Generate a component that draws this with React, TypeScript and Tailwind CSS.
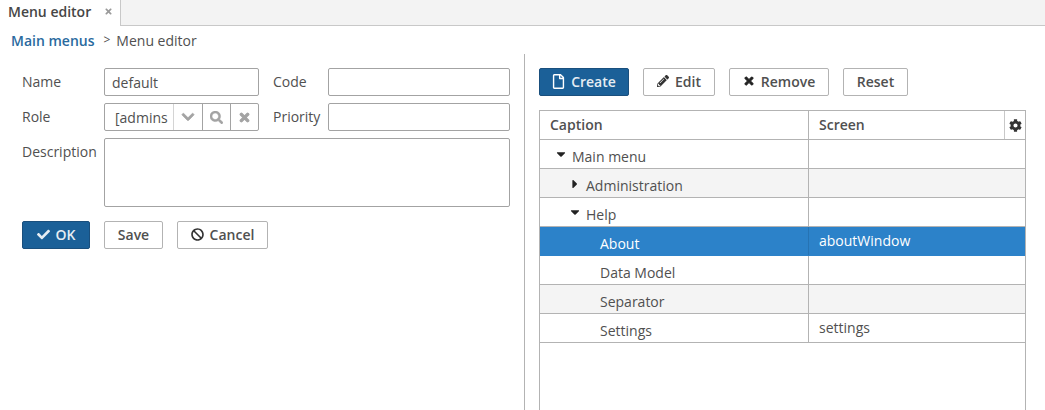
import React from "react";
import { FaBan, FaCaretDown, FaCaretRight, FaCheck, FaChevronDown, FaCog, FaPencilAlt, FaRegFile, FaSearch, FaTimes } from "react-icons/fa";

const btn = "h-[28px] pb-[2px] flex items-center justify-center gap-[6px] rounded-[2px] border border-[#b3b3b3] bg-white text-[14px] font-semibold text-[#505050]";
const primary = "h-[28px] pb-[2px] flex items-center justify-center gap-[6px] rounded-[2px] border border-[#1a4f7d] bg-[#1b6098] text-[14px] font-semibold text-[#e6edf3]";
const input = "h-[28px] rounded-[2px] border border-[#a3a3a3] bg-white";

const rows: { label: string; pad: string; screen?: string; caret?: "down" | "right"; alt?: boolean; sel?: boolean }[] = [
  { label: "Main menu", pad: "pl-[32px]", caret: "down" },
  { label: "Administration", pad: "pl-[46px]", caret: "right", alt: true },
  { label: "Help", pad: "pl-[46px]", caret: "down" },
  { label: "About", pad: "pl-[60px]", screen: "aboutWindow", sel: true },
  { label: "Data Model", pad: "pl-[60px]" },
  { label: "Separator", pad: "pl-[60px]", alt: true },
  { label: "Settings", pad: "pl-[60px]", screen: "settings" },
];

export default function App() {
  return (
    <div className="w-[1045px] h-[410px] overflow-hidden bg-white flex flex-col text-[14px] text-[#505050] font-['Open_Sans',sans-serif]">
      <div className="h-[26px] flex bg-[#f3f3f3] border-b border-[#c8c8c8]">
        <div className="w-[121px] h-[26px] pl-[8px] pr-[7px] pb-[3px] flex items-center justify-between bg-white border-r border-[#c8c8c8] font-semibold text-[#464646]">
          <span>Menu editor</span>
          <FaTimes className="w-[9px] h-[9px] text-[#9a9a9a]" />
        </div>
      </div>
      <div className="h-[28px] flex items-center pl-[11px]">
        <span className="font-semibold text-[#2a6a9e]">Main menus</span>
        <span className="ml-[9px] text-[12px]">&gt;</span>
        <span className="ml-[6px]">Menu editor</span>
      </div>
      <div className="flex flex-1 min-h-0">
        <div className="w-[525px] h-full border-r border-[#b3b3b3] pt-[14px] pl-[22px] pr-[14px] flex flex-col">
          <div className="flex items-center">
            <span className="w-[82px] pb-[2px]">Name</span>
            <div className={input + " w-[155px] flex items-center pl-[7px]"}>default</div>
            <span className="ml-[14px] w-[55px] pb-[2px]">Code</span>
            <div className={input + " w-[182px]"} />
          </div>
          <div className="flex items-center mt-[7px]">
            <span className="w-[82px] pb-[2px]">Role</span>
            <div className={input + " w-[155px] flex items-stretch"}>
              <div className="w-[69px] pl-[10px] flex items-center overflow-hidden border-r border-[#d4d4d4]">[admins</div>
              <div className="w-[29px] flex items-center justify-center border-r border-[#a3a3a3]"><FaChevronDown className="w-[14px] h-[14px] text-[#a3a3a3] stroke-[30]" /></div>
              <div className="w-[28px] flex items-center justify-center border-r border-[#a3a3a3]"><FaSearch className="w-[13px] h-[13px] text-[#a3a3a3] stroke-[20]" /></div>
              <div className="flex-1 flex items-center justify-center"><FaTimes className="w-[13px] h-[13px] text-[#a3a3a3] stroke-[40]" /></div>
            </div>
            <span className="ml-[14px] w-[55px] pb-[2px]">Priority</span>
            <div className={input + " w-[182px]"} />
          </div>
          <div className="flex items-start mt-[7px]">
            <span className="w-[82px] pt-[3px]">Description</span>
            <div className="w-[406px] h-[69px] rounded-[2px] border border-[#a3a3a3] bg-white" />
          </div>
          <div className="flex mt-[14px]">
            <button className={primary + " w-[68px]"}><FaCheck className="w-[13px] h-[13px]" />OK</button>
            <button className={btn + " w-[59px] ml-[14px]"}>Save</button>
            <button className={btn + " w-[91px] ml-[14px]"}><FaBan className="w-[13px] h-[13px] text-[#333]" />Cancel</button>
          </div>
        </div>
        <div className="flex-1 pt-[14px] pl-[14px] flex flex-col min-w-0">
          <div className="flex gap-[14px]">
            <button className={primary + " w-[90px]"}><FaRegFile className="w-[13px] h-[15px] text-white" />Create</button>
            <button className={btn + " w-[72px]"}><FaPencilAlt className="w-[12px] h-[12px] text-[#333]" />Edit</button>
            <button className={btn + " w-[100px]"}><FaTimes className="w-[12px] h-[12px] text-[#222] stroke-[40]" />Remove</button>
            <button className={btn + " w-[65px]"}>Reset</button>
          </div>
          <div className="mt-[14px] w-[487px] flex-1 border-x border-t border-[#b3b3b3] flex flex-col">
            <div className="h-[29px] flex border-b border-[#b3b3b3] font-semibold text-[#505050]">
              <div className="w-[269px] pl-[10px] pb-[2px] flex items-center border-r border-[#b3b3b3]">Caption</div>
              <div className="w-[196px] pl-[10px] pb-[2px] flex items-center border-r border-[#c8c8c8]">Screen</div>
              <div className="flex-1 flex items-center justify-center"><FaCog className="w-[13px] h-[13px] text-[#333]" /></div>
            </div>
            {rows.map((r) => (
              <div key={r.label} className={"h-[29px] flex border-b " + (r.sel ? "bg-[#2c82c9] text-white border-[#2c82c9]" : (r.alt ? "bg-[#f4f4f4] " : "bg-white ") + "border-[#b3b3b3]")}>
                <div className={"relative w-[268px] flex items-center pt-[5px] " + r.pad}>
                  {r.caret === "down" && <FaCaretDown className="absolute top-[7px] -ml-[18px] w-[14px] h-[14px] text-[#222]" />}
                  {r.caret === "right" && <FaCaretRight className="absolute top-[8px] -ml-[18px] w-[14px] h-[14px] text-[#222]" />}
                  {r.label}
                </div>
                <div className={"flex-1 pl-[10px] pb-[2px] flex items-center border-l " + (r.sel ? "border-[#2673b3]" : "border-[#b3b3b3]")}>{r.screen}</div>
              </div>
            ))}
          </div>
        </div>
      </div>
    </div>
  );
}
